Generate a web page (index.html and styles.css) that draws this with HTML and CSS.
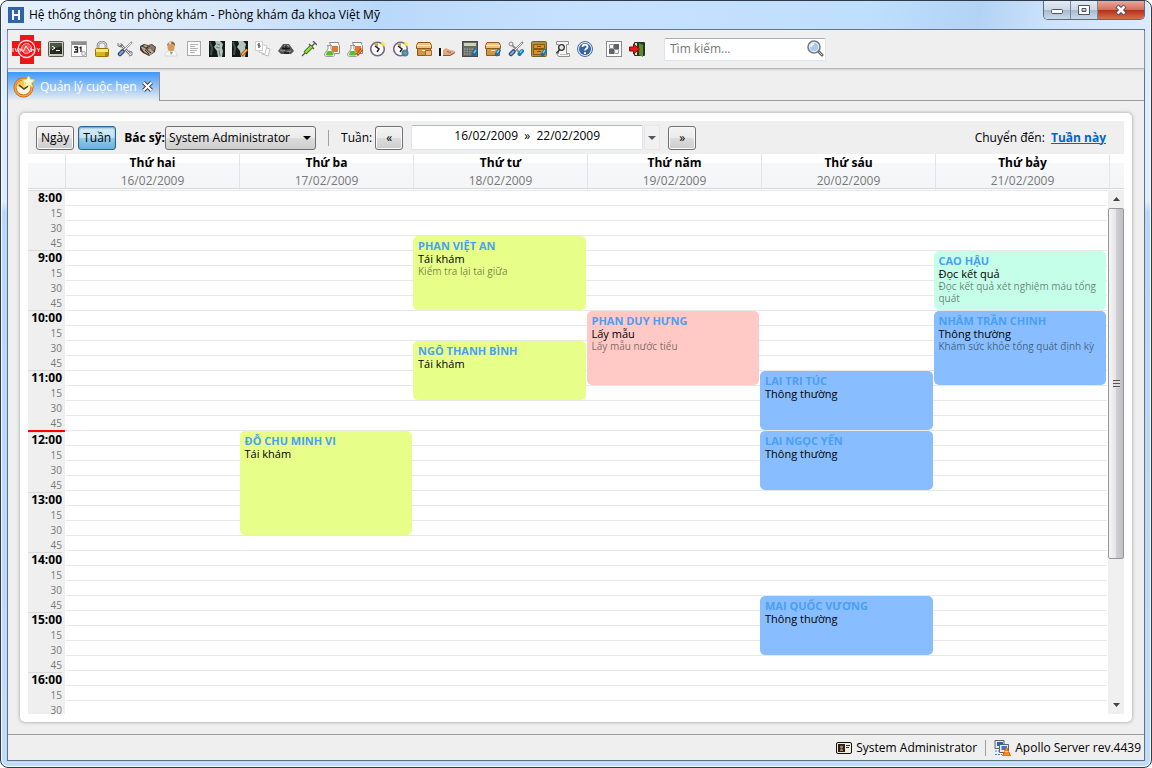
FILE: index.html
```html
<!DOCTYPE html>
<html lang="vi">
<head>
    <meta charset="UTF-8">
    <meta name="viewport" content="width=device-width, initial-scale=1.0">
    <title>Hệ thống thông tin phòng khám</title>
    <link rel="stylesheet" href="styles.css">
</head>
<body>
<div class="window">
    <header class="titlebar">
        <svg class="app-icon" width="16" height="16" viewBox="0 0 16 16"><rect width="16" height="16" fill="#2f64a8"/><path d="M5 3v10M11 3v10M5 8h6" stroke="#fff" stroke-width="2" fill="none"/></svg>
        <h1>Hệ thống thông tin phòng khám - Phòng khám đa khoa Việt Mỹ</h1>
        <div class="window-buttons">
            <button class="win-btn" aria-label="Thu nhỏ"><svg width="14" height="14" viewBox="0 0 14 14"><rect x="1.500" y="6.500" width="11" height="4" rx="1" fill="#fff" stroke="#4d5566"/></svg></button>
            <button class="win-btn" aria-label="Phóng to"><svg width="14" height="14" viewBox="0 0 14 14"><path d="M1.500 2.500h11v9h-11zM5 5.500h4v3H5z" fill="#fff" fill-rule="evenodd" stroke="#4d5566"/></svg></button>
            <button class="win-btn win-close" aria-label="Đóng"><svg width="14" height="14" viewBox="0 0 14 14"><path d="M3 3l8 8M11 3l-8 8" stroke="#5b4450" stroke-width="4.500"/><path d="M3.500 3.500l7 7M10.500 3.500l-7 7" stroke="#fff" stroke-width="2.500"/></svg></button>
        </div>
    </header>

    <div class="client">
        <nav class="toolbar" aria-label="Công cụ">
            <button class="tool logo" aria-label="Trang chính"><svg width="29" height="29" viewBox="0 0 29 29"><path d="M8 0h14v6h7v15h-7v8H8v-8H0V6h8z" fill="#f01414"/><circle cx="14.500" cy="14" r="8.500" fill="none" stroke="#ffe3e3" stroke-width="1.300"/><circle cx="14.500" cy="13.500" r="5" fill="#f34d4d" stroke="#ffb9b9"/><path d="M1 13v4M3 13l1.500 4 1.500-4M8 13v4M8 15h3M19 13v4l2-3 2 3M25 13l1.500 2 1.500-2M26.500 15v2M11 17l3-6 4 6" fill="none" stroke="#fff" stroke-width=".9"/></svg></button>
            <!-- console -->
            <button class="tool" aria-label="Bảng lệnh"><svg width="16" height="16" viewBox="0 0 16 16"><rect x=".5" y=".5" width="15" height="15" rx="1" fill="#c9ccc0" stroke="#55584c"/><rect x="2" y="2" width="12" height="11" fill="#222b1e"/><path d="M2 2h12v3L2 9z" fill="#4a5645"/><path d="M4 5l3 2-3 2M8 9.500h4" fill="none" stroke="#fff"/></svg></button>
            <!-- calendar -->
            <button class="tool" aria-label="Lịch"><svg width="16" height="16" viewBox="0 0 16 16"><rect x=".5" y=".5" width="15" height="15" fill="#fff" stroke="#a5a5a5"/><path d="M1 1h14v3H1z" fill="#8f8f8f"/><path d="M3 6h3.500v5H3M4 8.500h2.500M10 5.500v5.500M8.500 7l1.500-1" fill="none" stroke="#222" stroke-width="1.300"/><circle cx="12.500" cy="12.500" r="2" fill="#e5e5e5" stroke="#aaa"/></svg></button>
            <!-- lock -->
            <button class="tool" aria-label="Khóa"><svg width="16" height="16" viewBox="0 0 16 16"><path d="M4 8V4.500a4 3.500 0 0 1 8 0V8" fill="none" stroke="#888" stroke-width="2.600"/><path d="M4 8V4.500a4 3.500 0 0 1 8 0V8" fill="none" stroke="#ddd"/><rect x="1.500" y="7.500" width="13" height="8" rx="1" fill="#d6b51b" stroke="#94750a"/><path d="M2 8h12v3H2z" fill="#fae578"/><path d="M11 11h3v4h-3z" fill="#a98512"/></svg></button>
            <!-- tools -->
            <button class="tool" aria-label="Thiết lập"><svg width="16" height="16" viewBox="0 0 16 16"><path d="M3 3l10 10" stroke="#747a78" stroke-width="2.500"/><path d="M3 3l10 10" stroke="#e5e8e6"/><path d="M1 2v3l3 1 1-3M12 15l3-1v-3l-3-1" fill="none" stroke="#777"/><path d="M15 1L7 9" stroke="#999" stroke-width="2"/><path d="M14 2L7 9" stroke="#fff"/><path d="M5.500 10.500l-2.500 2.500" stroke="#26497c" stroke-width="4.500" stroke-linecap="round"/><path d="M5.500 10.500l-2.500 2.500" stroke="#8ca4cd" stroke-width="2" stroke-linecap="round"/></svg></button>
            <!-- handshake -->
            <button class="tool" aria-label="Đối tác"><svg width="16" height="16" viewBox="0 0 16 16"><path d="M0 5l4-2 4 1 4-1 4 3-1 5-6 4-6-3-3-3z" fill="#463c33"/><path d="M1 6l4-2 3 1-3 3 2 1 3-2 4 4-4 3-6-3z" fill="#bda48d"/><path d="M8 4l4 0 3 2-1 4-4-3-3 1" fill="#8d7768"/><path d="M5 9l4 4M7 9l4 3M1 9l3 3M2 5l4 2 4-2" stroke="#37302a" fill="none"/></svg></button>
            <!-- doctor -->
            <button class="tool" aria-label="Bác sĩ"><svg width="16" height="16" viewBox="0 0 16 16"><path d="M2 15c0-4 3-6 6-6s6 2 6 6z" fill="#f5f7f5" stroke="#d2d9d4"/><ellipse cx="8" cy="6" rx="3.500" ry="4.500" fill="#d99b5c"/><path d="M4 5c0-6 9-6 8 0l-2-2H6z" fill="#8f6420"/><circle cx="7" cy="2" r="1.500" fill="#c6d8e8"/><path d="M7 11l1 3 2-3z" fill="#6cab82"/></svg></button>
            <!-- document -->
            <button class="tool" aria-label="Tài liệu"><svg width="16" height="16" viewBox="0 0 16 16"><rect x="1.500" y=".5" width="13" height="14" fill="#fcfcfc" stroke="#a9a9a9"/><path d="M4 3.500h8M4 5.500h5M4 7.500h8M4 9.500h7M4 11.500h5" stroke="#b4b4b4"/></svg></button>
            <!-- x-ray -->
            <button class="tool" aria-label="X-quang"><svg width="16" height="16" viewBox="0 0 16 16"><rect width="16" height="16" fill="#101a18"/><path d="M6 0h5l3 3-1 4 1 3-1 6H9l-1-6-3-4 2-3z" fill="#b4c3bc"/><path d="M1 1l2 6-1 7" stroke="#40524b" fill="none" stroke-width="2"/><path d="M8 3l3 1M7 6l4 1M10 9l1 6" stroke="#6c7f78"/></svg></button>
            <button class="tool" aria-label="Sửa X-quang"><svg width="16" height="16" viewBox="0 0 16 16"><rect width="16" height="16" fill="#101a18"/><path d="M6 0h5l3 3-1 4 1 3-1 6H9l-1-6-3-4 2-3z" fill="#b4c3bc"/><path d="M1 1l2 6-1 7" stroke="#40524b" fill="none" stroke-width="2"/><path d="M15 8.500l-5.500 6" stroke="#a94809" stroke-width="3"/><path d="M15 8.500l-5 5.500" stroke="#ffad55" stroke-width="1.500"/></svg></button>
            <!-- invoices -->
            <button class="tool" aria-label="Hóa đơn"><svg width="16" height="16" viewBox="0 0 16 16"><path d="M9 6l6 2-2 7-6-2z" fill="#fff" stroke="#bbb"/><path d="M6 3l6 2-2 8-6-2z" fill="#fff" stroke="#c5c5c5"/><rect x=".5" y=".5" width="7" height="9" fill="#fff" stroke="#d0d0d0"/><path d="M5 3H3v1.500h2V6H3M4 2v5" stroke="#666" fill="none"/></svg></button>
            <!-- ultrasound -->
            <button class="tool" aria-label="Siêu âm"><svg width="16" height="16" viewBox="0 0 16 16"><path d="M5 3h6l5 7-3 3H3l-3-3z" fill="#555"/><path d="M6 4l2 2 2-2 2 4M2 9l3 1 2-1M9 11l4-1" stroke="#999" fill="none"/><path d="M4 7l4 1 4-1M6 12h5M8 5v2" stroke="#171717" fill="none" stroke-width="1.500"/></svg></button>
            <!-- syringe -->
            <button class="tool" aria-label="Tiêm"><svg width="16" height="16" viewBox="0 0 16 16"><path d="M1 15l4-4M11 5l3-3M12 0l4 4M8 3l5 5" stroke="#575757" stroke-width="1.300"/><path d="M4 12l7-7" stroke="#3b7018" stroke-width="4"/><path d="M4.500 11.500l6-6" stroke="#8ee53d" stroke-width="2.400"/></svg></button>
            <!-- lab flasks -->
            <button class="tool" aria-label="Xét nghiệm"><svg width="16" height="16" viewBox="0 0 16 16"><path d="M5.500 1.500h9v2l1 1v8h-9V4z" fill="#fff" stroke="#888"/><path d="M8 5h6v6H8z" fill="#e6762a"/><path d="M3 4.500h5M4 4.500V8l-3.500 5c0 2 1 2.500 2 2.500h6c2 0 2-1 2-2L7 8V4" fill="#f6f6f6" stroke="#999"/><path d="M3.500 10h4l2 3-1 1.500h-6L2 13z" fill="#59bd2a"/></svg></button>
            <button class="tool" aria-label="Sửa xét nghiệm"><svg width="16" height="16" viewBox="0 0 16 16"><path d="M5.500 1.500h9v2l1 1v8h-9V4z" fill="#fff" stroke="#888"/><path d="M8 5h6v6H8z" fill="#e6762a"/><path d="M3 4.500h5M4 4.500V8l-3.500 5c0 2 1 2.500 2 2.500h6c2 0 2-1 2-2L7 8V4" fill="#f6f6f6" stroke="#999"/><path d="M3.500 10h4l2 3-1 1.500h-6L2 13z" fill="#59bd2a"/><path d="M15 8l-5 6" stroke="#b95211" stroke-width="3"/><path d="M15 8l-4 5" stroke="#ffa64b"/></svg></button>
            <!-- clocks -->
            <button class="tool" aria-label="Cuộc hẹn"><svg width="16" height="16" viewBox="0 0 16 16"><circle cx="7.500" cy="8" r="6.800" fill="#fff" stroke="#7d6289" stroke-width="1.600"/><path d="M4 3l4-1v5z" fill="#c7a84a"/><path d="M5 5l4 3-2 3" fill="none" stroke="#222" stroke-width="1.500"/><path d="M13 0l1 2 2 1-2 1-1 2-1-2-2-1 2-1z" fill="#f8ea3b"/></svg></button>
            <button class="tool" aria-label="Lịch hẹn trực tuyến"><svg width="16" height="16" viewBox="0 0 16 16"><circle cx="7.500" cy="8" r="6.800" fill="#fff" stroke="#7d6289" stroke-width="1.600"/><path d="M4 3l4-1v5z" fill="#c7a84a"/><path d="M5 5l4 3-2 3" fill="none" stroke="#222" stroke-width="1.500"/><path d="M13 0l1 2 2 1-2 1-1 2-1-2-2-1 2-1z" fill="#f8ea3b"/><circle cx="12" cy="12" r="3.500" fill="#4a78ba"/><path d="M10 11l3-1 1 3-2 1z" fill="#70a95a"/></svg></button>
            <!-- stock boxes -->
            <button class="tool" aria-label="Kho"><svg width="16" height="16" viewBox="0 0 16 16"><path d="M2 1.500h12l1.500 3v3h-15v-3z" fill="#f1c080" stroke="#8d5a1c"/><path d="M1.500 7.500h13v7h-13z" fill="#d69343" stroke="#8d5a1c"/><path d="M1 4.500h14M6 9.500h4" stroke="#fff0cd"/><path d="M9.500 9.500h6v5h-6z" fill="#eab873" stroke="#9b672a"/></svg></button>
            <!-- hand -->
            <button class="tool" aria-label="Bàn giao"><svg width="16" height="16" viewBox="0 0 16 16"><path d="M0 7h2v8H0z" fill="#111"/><path d="M2 8h2v6H2z" fill="#fff"/><path d="M4 9l3-2 4 2 5 1-1 3-4 2H4z" fill="#dba982"/><path d="M4 14.500h7l5-3" stroke="#865a42" fill="none"/><path d="M8 10.500l4 1" stroke="#9c6a4d"/></svg></button>
            <!-- calculator -->
            <button class="tool" aria-label="Máy tính"><svg width="16" height="16" viewBox="0 0 16 16"><rect x=".5" y=".5" width="15" height="15" fill="#666b68" stroke="#454845"/><path d="M2 2h12v3H2z" fill="#cad5b8"/><path d="M2 8h10M2 10.500h8M2 13h7" stroke="#999e9a" stroke-width="1.500" stroke-dasharray="1.500 1"/><path d="M14 9.500l-2.500 4" stroke="#176da5" stroke-width="3.500" stroke-linecap="round"/><path d="M14 9l-2 3" stroke="#6fc7f2" stroke-width="1.500"/></svg></button>
            <button class="tool" aria-label="Nhập kho"><svg width="16" height="16" viewBox="0 0 16 16"><path d="M2 1.500h12l1.500 3v3h-15v-3z" fill="#f1c080" stroke="#8d5a1c"/><path d="M1.500 7.500h13v7h-13z" fill="#d69343" stroke="#8d5a1c"/><path d="M1 4.500h14M6 9.500h4" stroke="#fff0cd"/><path d="M14 9.500l-2.500 4" stroke="#176da5" stroke-width="3.500" stroke-linecap="round"/><path d="M14 9l-2 3" stroke="#6fc7f2" stroke-width="1.500"/></svg></button>
            <button class="tool" aria-label="Bảo trì"><svg width="16" height="16" viewBox="0 0 16 16"><path d="M3 3l9 9" stroke="#8b8f8d" stroke-width="2"/><circle cx="3" cy="3" r="2" fill="#eee" stroke="#888"/><path d="M15 1L7 9" stroke="#888" stroke-width="2"/><path d="M14 2L7 9" stroke="#fff"/><path d="M5.500 10.500l-2.500 2.500" stroke="#26497c" stroke-width="4.500" stroke-linecap="round"/><path d="M5.500 10.500l-2.500 2.500" stroke="#91a6c8" stroke-width="2" stroke-linecap="round"/><path d="M14 10l-2.500 3" stroke="#1678b2" stroke-width="4" stroke-linecap="round"/><path d="M14 9l-2 3" stroke="#70c9f4" stroke-width="1.500"/></svg></button>
            <!-- cabinet -->
            <button class="tool" aria-label="Tủ hồ sơ"><svg width="16" height="16" viewBox="0 0 16 16"><rect x=".5" y=".5" width="15" height="15" rx="1" fill="#a7924b" stroke="#70602c"/><path d="M2.500 3.500h11v4h-11zM2.500 8.500h11v5h-11z" fill="#d99220" stroke="#8b560f"/><path d="M6 5.500h4M6 10.500h4" stroke="#7a4f0c"/><path d="M14 9.500l-2.500 4" stroke="#176da5" stroke-width="3.500" stroke-linecap="round"/><path d="M14 9l-2 3" stroke="#6fc7f2" stroke-width="1.500"/></svg></button>
            <!-- script search -->
            <button class="tool" aria-label="Tra cứu"><svg width="16" height="16" viewBox="0 0 16 16"><path d="M2.500.5h12v3h-2v9h3v3h-11l-2-3h2v-9h-2z" fill="#f4f4f0" stroke="#90908c"/><circle cx="7.500" cy="6.500" r="2.800" fill="#e5eaf0" stroke="#333" stroke-width="1.300"/><path d="M5.500 9l-3 3" stroke="#333" stroke-width="1.600"/><path d="M6 13.500h8" stroke="#bbb"/></svg></button>
            <!-- help -->
            <button class="tool" aria-label="Trợ giúp"><svg width="16" height="16" viewBox="0 0 16 16"><circle cx="8" cy="8" r="7.500" fill="#e4eaf4" stroke="#4f6a99"/><circle cx="8" cy="8" r="6" fill="#3864a8"/><path d="M5.500 6c0-3 5-3 5 0 0 2-2.500 1.500-2.500 3.500M8 11v2" fill="none" stroke="#fff" stroke-width="1.800"/></svg></button>
            <!-- layout -->
            <button class="tool tool-spaced" aria-label="Bố cục"><svg width="16" height="16" viewBox="0 0 16 16"><rect x=".5" y=".5" width="15" height="15" fill="#fff" stroke="#8b8b8b"/><path d="M3.500 3.500h4v4h-4zM8.500 8.500h4v4h-4z" fill="#f4f4f4" stroke="#999"/><path d="M8 3h5v5H8zM3 8h5v5H3z" fill="#5c646c"/></svg></button>
            <!-- exit -->
            <button class="tool" aria-label="Thoát"><svg width="16" height="16" viewBox="0 0 16 16"><path d="M5.500 1.500h10v13h-10z" fill="#d9ddd6" stroke="#2a3024"/><path d="M8 2h7v12H8z" fill="#223d15"/><path d="M10 2l4 2v12l-4-2z" fill="#598d31"/><path d="M.5 6h4V3l6 5-6 5v-3h-4z" fill="#e01d1d" stroke="#7d1111"/></svg></button>
            <div class="search">
                <input type="search" placeholder="Tìm kiếm..." aria-label="Tìm kiếm">
                <svg width="17" height="17" viewBox="0 0 17 17"><path d="M11 11l4 4" stroke="#666" stroke-width="3" stroke-linecap="round"/><path d="M12 12l3 3" stroke="#ccc"/><circle cx="7" cy="7" r="6" fill="#a9cbee" stroke="#77797c" stroke-width="1.600"/><circle cx="7" cy="7" r="4.700" fill="none" stroke="#e8f2fc"/><path d="M4 7c0-2 1-3 3-3" stroke="#fff" fill="none" stroke-width="1.500"/></svg>
            </div>
        </nav>

        <div class="tabs">
            <div class="tab">
                <svg width="22" height="22" viewBox="0 0 22 22"><circle cx="10.500" cy="11.500" r="8.500" fill="#fff3dc" stroke="#c9650b" stroke-width="3"/><circle cx="10.500" cy="11.500" r="8.500" fill="none" stroke="#f6a444" stroke-width="1.500"/><path d="M3.500 10a8 8 0 0 1 8-5.500l-1 8z" fill="#f3c65a"/><path d="M6 9l5 4 4-3" fill="none" stroke="#524536" stroke-width="1.600"/><path d="M15.500 0l2 3.500 4 .5-3 3 1 4-4-2-4 2 1-4-3-3 4-.5z" fill="#fffbd8" stroke="#f5dc37"/></svg>
                <span>Quản lý cuộc hẹn</span>
                <button class="tab-close" aria-label="Đóng thẻ"><svg width="11" height="11" viewBox="0 0 11 11"><path d="M1.500 1.500l8 8M9.500 1.500l-8 8" stroke="#444" stroke-width="4"/><path d="M1.500 1.500l8 8M9.500 1.500l-8 8" stroke="#fff" stroke-width="2"/></svg></button>
            </div>
            <div class="tabs-rest"></div>
        </div>

        <main class="content">
            <section class="panel">
                <div class="controls">
                    <button class="btn">Ngày</button>
                    <button class="btn active">Tuần</button>
                    <label class="doctor-label" for="doctor">Bác sỹ:</label>
                    <select id="doctor">
                        <option>System Administrator</option>
                    </select>
                    <span class="separator"></span>
                    <label class="week-label" for="week">Tuần:</label>
                    <button class="btn step" aria-label="Tuần trước">«</button>
                    <div class="week-picker">
                        <input type="text" id="week" value="16/02/2009  »  22/02/2009">
                        <button class="drop" aria-label="Chọn tuần"><svg width="8" height="4" viewBox="0 0 8 4"><path d="M0 0h8L4 4z" fill="#555"/></svg></button>
                    </div>
                    <button class="btn step" aria-label="Tuần sau">»</button>
                    <div class="jump">Chuyển đến: <a href="#">Tuần này</a></div>
                </div>

                <div class="day-heads" id="dayHeads"></div>

                <div class="calendar">
                    <div class="hours" id="hours"></div>
                    <div class="days" id="days"></div>
                    <div class="scrollbar">
                        <button class="scroll-arrow" aria-label="Cuộn lên"><svg width="7" height="4" viewBox="0 0 7 4"><path d="M0 4h7L3.500 0z" fill="#444"/></svg></button>
                        <div class="scroll-track">
                            <div class="scroll-thumb"><span class="grip"></span></div>
                        </div>
                        <button class="scroll-arrow" aria-label="Cuộn xuống"><svg width="7" height="4" viewBox="0 0 7 4"><path d="M0 0h7L3.500 4z" fill="#444"/></svg></button>
                    </div>
                </div>
            </section>
        </main>

        <footer class="statusbar">
            <svg width="16" height="12" viewBox="0 0 16 12"><rect x=".5" y=".5" width="15" height="11" rx="1.500" fill="#f2ecdf" stroke="#111"/><rect x="2" y="2" width="7" height="8" fill="#222"/><circle cx="5.500" cy="5" r="1.500" fill="#c98442"/><path d="M4 9c0-3 3-3 3 0z" fill="#c98442"/><path d="M10 3.500h4M10 5.500h3" stroke="#333"/></svg>
            <span>System Administrator</span>
            <span class="separator"></span>
            <svg width="17" height="16" viewBox="0 0 17 16"><path d="M1 .5h9v8H1z" fill="#e7eaee" stroke="#5a626c"/><path d="M3 2h6v4H3z" fill="#2b62b5"/><path d="M5.500 4.500h9v8h-9z" fill="#e7eaee" stroke="#5a626c"/><path d="M7.500 6h5.500v4H7.500z" fill="#3d77cb"/><path d="M1 11h4M1 14.500h7" stroke="#5d7fae" stroke-dasharray="2 1"/><path d="M12.500 7l4 9h-8z" fill="#ff8a1c" stroke="#d36305"/><path d="M10.500 11.500h4" stroke="#ffd09d"/></svg>
            <span>Apollo Server rev.4439</span>
        </footer>
    </div>
</div>
<script>
    const days = [
        ['Thứ hai', '16/02/2009'],
        ['Thứ ba', '17/02/2009'],
        ['Thứ tư', '18/02/2009'],
        ['Thứ năm', '19/02/2009'],
        ['Thứ sáu', '20/02/2009'],
        ['Thứ bảy', '21/02/2009']
    ];

    const firstHour = 8;
    const lastSlot = 16.5;
    const currentHour = 12;

    // day is the column number, from and to are hours
    const appointments = [
        { day: 2, from: 12, to: 13.75, type: 'recheck', name: 'ĐỖ CHU MINH VI', title: 'Tái khám' },
        { day: 3, from: 8.75, to: 10, type: 'recheck', name: 'PHAN VIỆT AN', title: 'Tái khám', note: 'Kiểm tra lại tai giữa' },
        { day: 3, from: 10.5, to: 11.5, type: 'recheck', name: 'NGÔ THANH BÌNH', title: 'Tái khám' },
        { day: 4, from: 10, to: 11.25, type: 'sample', name: 'PHAN DUY HƯNG', title: 'Lấy mẫu', note: 'Lấy mẫu nước tiểu' },
        { day: 5, from: 11, to: 12, type: 'normal', name: 'LAI TRI TÚC', title: 'Thông thường' },
        { day: 5, from: 12, to: 13, type: 'normal', name: 'LAI NGỌC YẾN', title: 'Thông thường' },
        { day: 5, from: 14.75, to: 15.75, type: 'normal', name: 'MAI QUỐC VƯƠNG', title: 'Thông thường' },
        { day: 6, from: 9, to: 10, type: 'result', name: 'CAO HẬU', title: 'Đọc kết quả', note: 'Đọc kết quả xét nghiệm máu tổng quát' },
        { day: 6, from: 10, to: 11.25, type: 'normal', name: 'NHÂM TRẦN CHINH', title: 'Thông thường', note: 'Khám sức khỏe tổng quát định kỳ' }
    ];

    function renderHeads() {
        document.getElementById('dayHeads').innerHTML = '<div></div>' +
            days.map(d => `<div><strong>${d[0]}</strong><span>${d[1]}</span></div>`).join('') + '<div></div>';
    }

    function renderHours() {
        let html = '';
        for (let t = firstHour; t <= lastSlot; t += 0.25) {
            if (t === currentHour) {
                html += '<div class="now"></div>';
            }
            if (t % 1 === 0) {
                html += `<div class="hour">${t}:00</div>`;
            } else {
                html += `<div>${(t % 1) * 60}</div>`;
            }
        }
        document.getElementById('hours').innerHTML = html;
    }

    function renderAppointments() {
        const grid = document.getElementById('days');
        appointments.forEach(a => {
            const el = document.createElement('article');
            el.className = 'event ' + a.type;
            el.style.gridColumn = a.day;
            el.style.gridRow = `${(a.from - firstHour) * 4 + 1} / ${(a.to - firstHour) * 4 + 1}`;
            el.innerHTML = `<h2>${a.name}</h2><p>${a.title}</p>` + (a.note ? `<small>${a.note}</small>` : '');
            grid.appendChild(el);
        });
    }

    renderHeads();
    renderHours();
    renderAppointments();
</script>
</body>
</html>
```
FILE: styles.css
```css
* {
    box-sizing: border-box;
}
body {
    margin: 0;
    background: #fff;
    color: #000;
    font-family: "Open Sans", "Noto Sans", sans-serif;
    font-size: 12px;
    line-height: 16px;
}
button, input, select {
    font: inherit;
    color: inherit;
    margin: 0;
}
button {
    padding: 0;
    background: none;
    border: none;
}
svg {
    display: block;
    flex: none;
}

/* window frame */
.window {
    display: flex;
    flex-direction: column;
    height: 100vh;
    padding: 0 6px 6px;
    border: 1px solid #2f3b4b;
    border-radius: 8px;
    background: linear-gradient(#dcebfb 0, #e0edfc 200px, #b9d7f8 212px, #c2dcfa 100%);
    box-shadow: inset 0 0 0 1px #f5faff;
}
.titlebar {
    display: flex;
    align-items: center;
    gap: 5px;
    flex: none;
    height: 28px;
    margin: 0 -5px;
    padding-left: 6px;
    border-radius: 7px 7px 0 0;
    background: linear-gradient(100deg, #e6f1fd 0, #d5e6fa 20%, #b9d9fa 33%, #c6e1fe 50%, #bfdffe 75%, #b3d3f5 85%, #cfe4fb 92%, #dcebfc 100%);
}
.titlebar h1 {
    flex: 1;
    margin: 0;
    font-size: 12px;
    font-weight: 400;
}
.window-buttons {
    display: flex;
    align-self: flex-start;
    margin-right: 5px;
    border: 1px solid #5c6b80;
    border-top: none;
    border-radius: 0 0 5px 5px;
    overflow: hidden;
}
.win-btn {
    display: flex;
    align-items: center;
    justify-content: center;
    width: 27px;
    height: 18px;
    border-right: 1px solid #77889d;
    background: linear-gradient(#e3ebf5 0, #cbd8e7 48%, #a9bbd0 52%, #c9d9ea 100%);
}
.win-close {
    width: 46px;
    border-right: none;
    background: linear-gradient(#e7a99d 0, #d4705b 48%, #b7301c 52%, #d6704e 100%);
}

.client {
    display: flex;
    flex: 1;
    flex-direction: column;
    min-height: 0;
    border: 1px solid #5f6f84;
    background: #efefef;
}

/* icon toolbar */
.toolbar {
    display: flex;
    align-items: center;
    gap: 7px;
    height: 39px;
    padding-left: 4px;
    border-bottom: 1px solid #b4b4b4;
    box-shadow: 0 1px 2px #d0d0d0;
}
.tool-spaced {
    margin-left: 6px;
}
.search {
    display: flex;
    align-items: center;
    width: 162px;
    height: 23px;
    margin-left: 12px;
    padding: 0 1px 2px 5px;
    border: 1px solid #dce3eb;
    border-top-color: #a5afbb;
    border-radius: 2px;
    background: #fff;
}
.search input {
    flex: 1;
    min-width: 0;
    padding: 2px 0 0;
    border: none;
    outline: none;
    background: none;
    appearance: none;
}
.search input::placeholder {
    color: #777;
}

/* tabs */
.tabs {
    display: flex;
    align-items: flex-end;
    height: 32px;
}
.tab {
    display: flex;
    align-items: center;
    gap: 5px;
    height: 29px;
    padding: 0 6px 0 5px;
    border-right: 1px solid #8c8c8c;
    background: linear-gradient(#3d98fb, #efefef);
    color: #fff;
}
.tabs-rest {
    flex: 1;
    border-bottom: 1px solid #9c9c9c;
}

.content {
    display: flex;
    flex: 1;
    min-height: 0;
    padding: 12px;
}
.panel {
    display: flex;
    flex: 1;
    flex-direction: column;
    min-width: 0;
    padding: 8px;
    border-radius: 5px;
    background: #fff;
    box-shadow: 0 0 3px 1px #bcbcbc;
}

/* week controls */
.controls {
    display: flex;
    align-items: center;
    flex: none;
    height: 33px;
    padding: 0 18px 0 8px;
    background: #efefef;
}
.btn {
    height: 24px;
    padding: 0 4px;
    border: 1px solid #707070;
    border-radius: 3px;
    background: linear-gradient(#f3f3f3 0, #ebebeb 49%, #dcdcdc 51%, #cdcdcd 100%);
    box-shadow: inset 0 0 0 1px #fafafa;
}
.btn.active {
    margin-left: 4px;
    border-color: #2c628b;
    background: linear-gradient(#d5ecf8 0, #bfe2f5 49%, #93cbec 51%, #68b3db 100%);
    box-shadow: inset 0 1px 2px #6d93ab;
}
.btn.step {
    width: 28px;
}
.doctor-label {
    margin-left: 8px;
    font-weight: 700;
}
select {
    width: 151px;
    height: 24px;
    padding: 0 3px;
    border: 1px solid #707070;
    border-radius: 3px;
    background: url("data:image/svg+xml,%3Csvg xmlns='http://www.w3.org/2000/svg' width='8' height='4'%3E%3Cpath d='M0 0h8L4 4z'/%3E%3C/svg%3E") no-repeat right 4px center,
        linear-gradient(#f3f3f3 0, #ebebeb 49%, #dcdcdc 51%, #cdcdcd 100%);
    appearance: none;
}
.separator {
    width: 1px;
    height: 16px;
    margin: 0 12px;
    background: #a0a0a0;
}
.week-label {
    margin-right: 3px;
}
.week-picker {
    display: flex;
    margin: 0 8px;
    height: 25px;
}
.week-picker input {
    width: 232px;
    padding: 0 0 3px;
    border: 1px solid #dce3eb;
    border-top-color: #b3b9c1;
    border-radius: 2px;
    background: #fff;
    text-align: center;
}
.drop {
    display: flex;
    align-items: center;
    justify-content: center;
    width: 16px;
    margin-left: 1px;
    border: 1px solid #e6e6e6;
    background: #f1f1f1;
}
.jump {
    margin-left: auto;
}
.jump a {
    margin-left: 3px;
    color: #0066cc;
    font-weight: 700;
}

/* column heads */
.day-heads {
    display: grid;
    grid-template-columns: 38px repeat(6, 1fr) 14px;
    flex: none;
    height: 35px;
    border-bottom: 1px solid #d5d8db;
    background: linear-gradient(#fff 9px, #f6f7f9 9px, #f4f5f7);
    text-align: center;
}
.day-heads div {
    border-right: 1px solid #e2e4e7;
}
.day-heads div:last-child {
    border-right: none;
}
.day-heads strong, .day-heads span {
    display: block;
    line-height: 18px;
}
.day-heads span {
    color: #777;
}

/* calendar body */
.calendar {
    display: flex;
    flex: 1;
    min-height: 0;
    margin-top: 1px;
    overflow: hidden;
}
.hours {
    width: 37px;
    padding-right: 3px;
    background: #efefef;
    color: #777;
    font-size: 10px;
    line-height: 17px;
    text-align: right;
}
.hours div {
    height: 15px;
}
.hours .hour {
    border-top: 1px solid #dcdcdc;
    color: #000;
    font-size: 12px;
    font-weight: 700;
    line-height: 14px;
}
.hours .now {
    height: 2px;
    margin-right: -3px;
    background: #f00;
}
.days {
    display: grid;
    grid-template-columns: repeat(6, 1fr);
    grid-auto-rows: 15px;
    flex: 1;
    min-width: 0;
    margin-left: 1px;
    border-top: 1px solid #e8e8e8;
    background: repeating-linear-gradient(#fff 0, #fff 14px, #e8e8e8 14px, #e8e8e8 15px);
}
.event {
    margin: 0 1px 1px 0;
    padding: 3px 5px;
    border-radius: 5px;
    overflow: hidden;
    font-size: 11px;
    line-height: 13px;
}
.event h2, .event p {
    margin: 0;
    font-size: 11px;
}
.event h2 {
    color: #4a9ff5;
    font-weight: 700;
}
.event small {
    display: block;
    color: rgba(0, 0, 0, .5);
    font-size: 10px;
    line-height: 12px;
}
.recheck {
    background: #e7ff88;
}
.sample {
    background: #ffc9c5;
}
.normal {
    background: #88beff;
}
.result {
    background: #c6ffe9;
}

/* scrollbar */
.scrollbar {
    display: flex;
    flex-direction: column;
    width: 16px;
    margin-left: 1px;
    background: #f0f0f0;
}
.scroll-arrow {
    display: flex;
    align-items: center;
    justify-content: center;
    height: 18px;
}
.scroll-track {
    flex: 1;
}
.scroll-thumb {
    display: flex;
    align-items: center;
    justify-content: center;
    height: 72%;
    border: 1px solid #979797;
    border-radius: 2px;
    background: linear-gradient(90deg, #f5f5f5 0, #e6e6e8 48%, #d0d0d4 52%, #c0c0c4 100%);
}
.grip {
    width: 7px;
    height: 8px;
    background: repeating-linear-gradient(#555 0, #555 1px, #ddd 1px, #ddd 3px);
}

.statusbar {
    display: flex;
    align-items: center;
    gap: 4px;
    flex: none;
    height: 26px;
    padding-right: 3px;
    border-top: 1px solid #9c9c9c;
    justify-content: flex-end;
}
.statusbar .separator {
    margin: 0 4px;
}
```
